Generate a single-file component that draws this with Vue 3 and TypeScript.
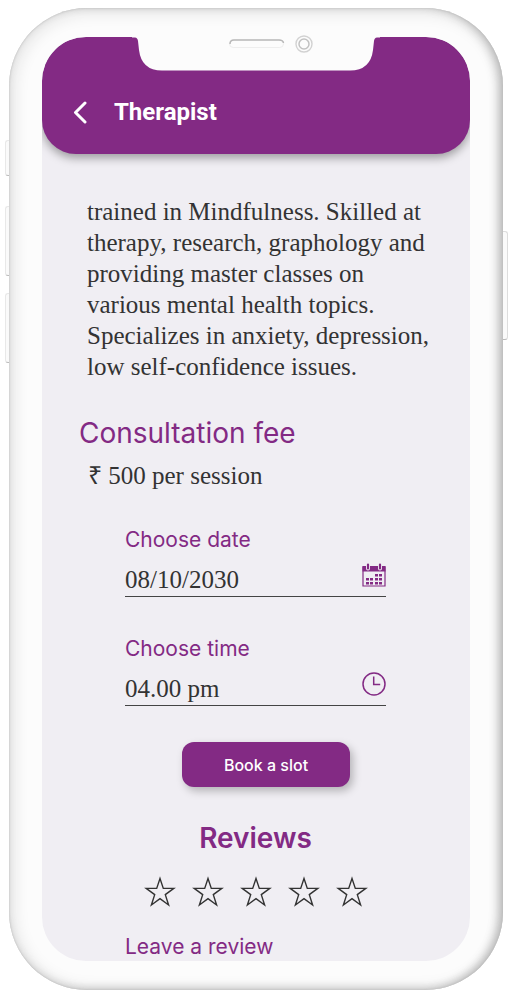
<script setup lang="ts">
import { ref } from 'vue'

const date = ref<string>('08/10/2030')
const time = ref<string>('04.00 pm')
const rating = ref<number>(0)
const stars: number[] = [1, 2, 3, 4, 5]
const calendarDots: { x: number; y: number }[] = [
  { x: 13, y: 11 }, { x: 17, y: 11 },
  { x: 4, y: 15 }, { x: 8, y: 15 }, { x: 13, y: 15 }, { x: 17, y: 15 },
  { x: 4, y: 19 }, { x: 8, y: 19 }, { x: 13, y: 19 }, { x: 17, y: 19 },
]
</script>

<template>
  <div class="stage">
    <div class="phone">
      <span class="side-key mute"></span>
      <span class="side-key volume-up"></span>
      <span class="side-key volume-down"></span>
      <span class="side-key power"></span>

      <div class="screen">
        <header class="top-bar">
          <button class="back" type="button" aria-label="Back">
            <svg width="14" height="24" viewBox="0 0 14 24" fill="none">
              <path d="M12 2 2.500 11.500 12 21" stroke="#fff" stroke-width="3" stroke-linecap="round" stroke-linejoin="round" />
            </svg>
          </button>
          <h1>Therapist</h1>
        </header>

        <main>
          <p class="bio">
            trained in Mindfulness. Skilled at therapy, research, graphology and
            providing master classes on various mental health topics.
            Specializes in anxiety, depression, low self-confidence issues.
          </p>

          <section class="fee">
            <h2>Consultation fee</h2>
            <p>₹ 500 per session</p>
          </section>

          <form class="booking" @submit.prevent>
            <div class="field">
              <label for="date">Choose date</label>
              <div class="control">
                <input id="date" v-model="date" type="text" />
                <svg width="24" height="24" viewBox="0 0 24 24" fill="none">
                  <path d="M1 4h22v19H1z" stroke="#832a84" stroke-width="1.200" />
                  <path d="M.5 3h23v5.500H.5z" fill="#832a84" />
                  <path d="M6 2v3.400M18 2v3.400" stroke="#f0eef3" stroke-width="4" stroke-linecap="round" />
                  <path d="M6 1.500v4M18 1.500v4" stroke="#832a84" stroke-width="2.200" stroke-linecap="round" />
                  <rect v-for="dot in calendarDots" :key="`${dot.x}-${dot.y}`" :x="dot.x" :y="dot.y" width="3" height="2.500" fill="#832a84" />
                </svg>
              </div>
            </div>
            <div class="field">
              <label for="time">Choose time</label>
              <div class="control">
                <input id="time" v-model="time" type="text" />
                <svg width="24" height="24" viewBox="0 0 24 24" fill="none" stroke="#832a84">
                  <circle cx="12" cy="12" r="11" stroke-width="1.500" />
                  <path d="M11.700 4.500v8h6.500" stroke-width="1.500" />
                </svg>
              </div>
            </div>
            <button class="book" type="submit">Book a slot</button>
          </form>

          <section class="reviews">
            <h2>Reviews</h2>
            <div class="stars">
              <button v-for="n in stars" :key="n" type="button" :aria-label="`Rate ${n}`" @click="rating = n">
                <svg width="32" height="32" viewBox="0 0 32 32">
                  <path d="M16 2.500 19.300 12.400H29.800L21.300 18.600 24.600 29 16 22.600 7.400 29 10.700 18.600 2.200 12.400H12.700Z" :fill="n <= rating ? '#333' : 'none'" stroke="#333" stroke-width="1.400" />
                </svg>
              </button>
            </div>
            <a class="leave" href="#review">Leave a review</a>
          </section>
        </main>
      </div>

      <div class="notch">
        <svg width="248" height="35" viewBox="0 0 248 35">
          <path d="M0 0H248V1.500H245Q242.500 1.500 242 5L241 14Q238.500 34.500 218 34.500H30Q9.500 34.500 7 14L6 5Q5.500 1.500 3 1.500H0Z" fill="#fcfcfc" />
        </svg>
      </div>
      <div class="sensors">
        <svg width="86" height="20" viewBox="0 0 86 20" fill="none">
          <rect x="1.500" y="6" width="54" height="7.500" rx="3.750" stroke="#eee" />
          <path d="M2 10Q2 6 6 6H51Q55 6 55.500 9" stroke="#b9b9b9" stroke-width="1.500" />
          <circle cx="76" cy="10" r="8" stroke="#d2d2d2" stroke-width="1.400" />
          <circle cx="76" cy="10" r="5" stroke="#c2c2c2" stroke-width="1.500" />
        </svg>
      </div>
    </div>
  </div>
</template>

<style>
body {
  margin: 0;
  background: #fff;
}
</style>

<style scoped>
.stage {
  padding: 8px 9px 6px;
}

.phone {
  position: relative;
  padding: 29px 33px;
  border-radius: 78px;
  background: #fcfcfc;
  box-shadow:
    inset 0 0 2px #b5b5b5,
    inset -6px 0 10px -2px #bbb,
    inset 2px 2px 18px #dcdcdc,
    inset 0 -3px 8px -2px #c9c9c9;
}

.side-key {
  position: absolute;
  left: -4px;
  width: 4px;
  box-sizing: border-box;
  border: 1px solid #e8e8e8;
  border-right: 0;
  border-bottom-color: #bbb;
  border-radius: 3px 0 0 3px;
  background: #fafafa;
}

.mute {
  top: 132px;
  height: 36px;
}

.volume-up {
  top: 198px;
  height: 70px;
}

.volume-down {
  top: 285px;
  height: 70px;
}

.power {
  top: 223px;
  right: -5px;
  left: auto;
  width: 5px;
  height: 109px;
  border: 1px solid #ddd;
  border-left: 0;
  border-bottom-color: #bbb;
  border-radius: 0 3px 3px 0;
}

.screen {
  overflow: hidden;
  border-radius: 44px;
  background: #f0eef3;
  color: #333;
  font-family: "Liberation Serif", serif;
  font-size: 25px;
}

.top-bar {
  display: flex;
  align-items: center;
  gap: 25px;
  padding: 59px 31px 25px;
  border-radius: 44px 44px 34px 34px;
  background: #832a84;
  box-shadow: 0 4px 10px rgb(0 0 0 / 35%);
}

button {
  border: 0;
  padding: 0;
  background: none;
  cursor: pointer;
}

svg {
  display: block;
}

.back {
  width: 16px;
}

h1 {
  margin: 0;
  color: #fff;
  font: 700 24px/33px Roboto, sans-serif;
}

h2 {
  margin: 0;
  color: #832a84;
  font-family: Inter, sans-serif;
  font-size: 28px;
  font-weight: 400;
  line-height: 36px;
}

p {
  margin: 0;
}

.bio {
  margin: 42px 36px 0 45px;
  line-height: 31px;
}

.fee {
  padding: 33px 37px 0;
}

.fee p {
  padding: 9px;
  line-height: 31px;
}

.booking {
  display: flex;
  flex-direction: column;
  gap: 36px;
  padding: 27px 84px 0 83px;
}

.field + .field {
  margin-top: 3px;
}

.field label,
.leave {
  display: block;
  color: #832a84;
  font-family: Inter, sans-serif;
  font-size: 21px;
  line-height: 26px;
}

.control {
  display: flex;
  align-items: flex-start;
  padding-top: 10px;
  border-bottom: 1px solid #444;
}

.control input {
  flex: 1;
  min-width: 0;
  height: 33px;
  padding: 0;
  border: 0;
  outline: 0;
  background: none;
  color: inherit;
  font: inherit;
}

.book {
  align-self: flex-start;
  width: 168px;
  height: 45px;
  margin-left: 57px;
  border-radius: 12px;
  background: #832a84;
  box-shadow: 3px 4px 8px rgb(0 0 0 / 25%);
  color: #fff;
  font-family: Inter, sans-serif;
  font-size: 16px;
  font-weight: 500;
}

.reviews {
  padding: 33px 84px 1px 83px;
}

.reviews h2 {
  text-align: center;
  font-weight: 600;
}

.stars {
  display: flex;
  justify-content: center;
  gap: 16px;
  padding: 20px 0 26px;
}

.leave {
  text-decoration: none;
}

.notch {
  position: absolute;
  top: 28px;
  left: 50%;
  transform: translateX(-50%);
}

.sensors {
  position: absolute;
  top: 26px;
  left: 219px;
}
</style>
